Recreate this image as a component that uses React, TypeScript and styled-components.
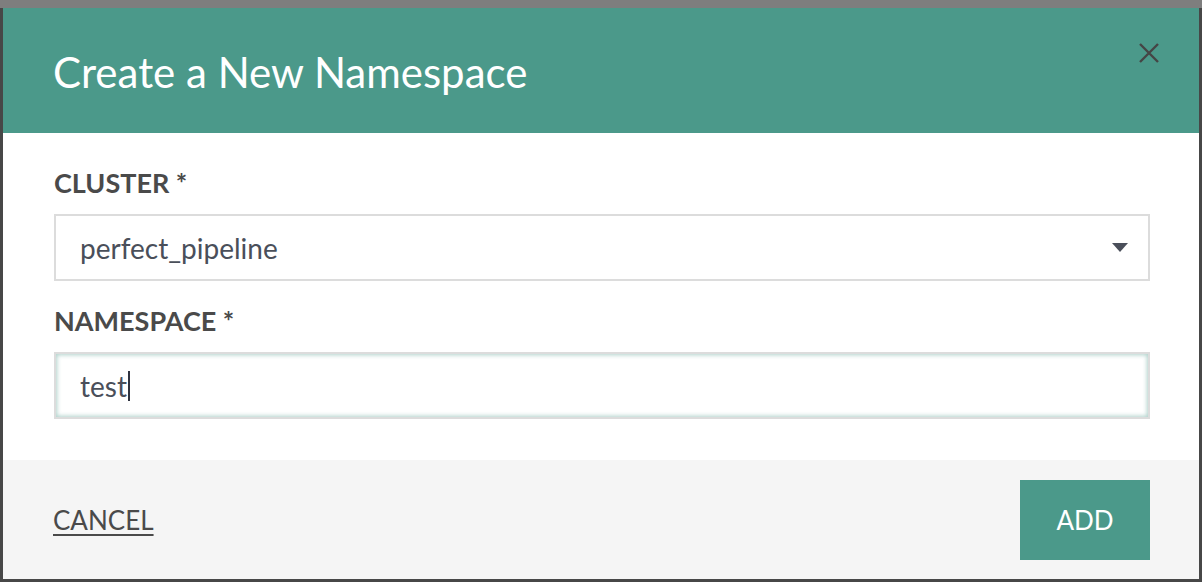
import React from "react";
import styled, { createGlobalStyle } from "styled-components";

const Global = createGlobalStyle`
  html, body { margin: 0; padding: 0; }
  body {
    background: #3f3f3f;
    font-family: Lato, "Open Sans", sans-serif;
    width: 1202px;
    height: 582px;
    overflow: hidden;
  }
  #root { height: 582px; }
`;

const Page = styled.div`
  height: 582px;
  display: flex;
  flex-direction: column;
  background: linear-gradient(#7e7e7e 0 8px, #474747 8px);
`;

const Dialog = styled.div`
  margin: 8px 3px 3px 3px;
  height: 571px;
  display: flex;
  flex-direction: column;
  background: #fff;
`;

const Header = styled.div`
  height: 125px;
  flex: none;
  background: #4b998a;
  display: flex;
  align-items: center;
  justify-content: space-between;
  padding: 0 38px 0 50px;
  box-sizing: border-box;
`;

const Title = styled.h1`
  margin: 0;
  font-weight: 400;
  font-size: 42px;
  line-height: 50px;
  color: #fff;
  padding-top: 2px;
`;

const Close = styled.button`
  border: 0;
  background: none;
  padding: 0;
  width: 24px;
  height: 24px;
  margin-top: -36px;
  display: flex;
  align-items: center;
  justify-content: center;
  cursor: pointer;
`;

const Body = styled.div`
  flex: 1;
  padding: 34px 49px 0 51px;
  display: flex;
  flex-direction: column;
`;

const Label = styled.label`
  display: block;
  font-weight: 700;
  font-size: 27px;
  color: #4a4a4a;
  line-height: 32px;
  margin-bottom: 15px;
`;

const Field = styled.div<{ $focused?: boolean }>`
  height: 67px;
  flex: none;
  box-sizing: border-box;
  border: 2px solid #dcdcdc;
  background: #fff;
  display: flex;
  align-items: center;
  justify-content: space-between;
  padding: 0 20px 0 24px;
  margin-bottom: 24px;
  box-shadow: ${(p) =>
    p.$focused ? "inset 0 0 4px 1px rgba(75,153,138,0.45)" : "none"};
`;

const Value = styled.span`
  font-size: 28px;
  color: #4a4f5a;
  display: flex;
  align-items: center;
`;

const Caret = styled.span`
  display: inline-block;
  width: 2px;
  height: 30px;
  background: #2f3340;
  margin-left: 1px;
`;

const Footer = styled.div`
  height: 119px;
  flex: none;
  background: #f5f5f5;
  display: flex;
  align-items: center;
  justify-content: space-between;
  padding: 0 49px 0 50px;
`;

const Cancel = styled.a`
  font-size: 26px;
  color: #4a4a4a;
  text-decoration: underline;
  text-underline-offset: 4px;
  cursor: pointer;
`;

const AddButton = styled.button`
  width: 130px;
  height: 80px;
  border: 0;
  background: #4b998a;
  color: #fff;
  font-family: Lato, sans-serif;
  font-size: 26px;
  cursor: pointer;
`;

export default function App() {
  return (
    <>
      <Global />
      <Page>
        <Dialog>
          <Header>
            <Title>Create a New Namespace</Title>
            <Close aria-label="Close">
              <svg width="22" height="22" viewBox="0 0 22 22">
                <path
                  d="M2 2 L20 20 M20 2 L2 20"
                  stroke="#454545"
                  strokeWidth="2.4"
                  fill="none"
                />
              </svg>
            </Close>
          </Header>
          <Body>
            <Label>CLUSTER *</Label>
            <Field>
              <Value>perfect_pipeline</Value>
              <svg width="16" height="9" viewBox="0 0 16 9">
                <path d="M0 0 H16 L8 9 Z" fill="#4a4f5a" />
              </svg>
            </Field>
            <Label>NAMESPACE *</Label>
            <Field $focused>
              <Value>
                test
                <Caret />
              </Value>
            </Field>
          </Body>
          <Footer>
            <Cancel>CANCEL</Cancel>
            <AddButton>ADD</AddButton>
          </Footer>
        </Dialog>
      </Page>
    </>
  );
}
